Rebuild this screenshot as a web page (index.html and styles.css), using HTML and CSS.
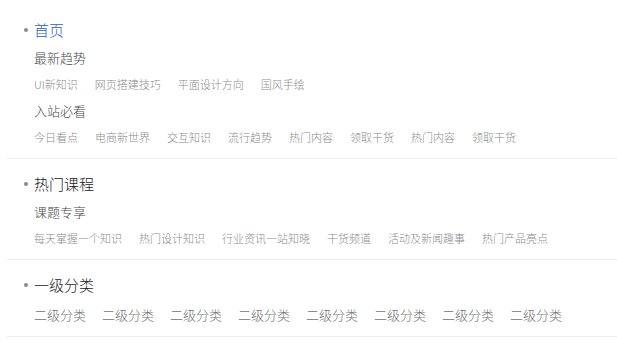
FILE: index.html
```html
<!DOCTYPE html>
<html>
	<head>
		<title>导航菜单</title>
		<link rel="stylesheet" href="styles.css">
	</head>
	<body>
		<ul class="menu">
			<li class="menu-item">
				<div class="menu-title active"><span class="dot"></span>首页</div>
				<div class="sub-title">最新趋势</div>
				<div class="links">
					<a>UI新知识</a>
					<a>网页搭建技巧</a>
					<a>平面设计方向</a>
					<a>国风手绘</a>
				</div>
				<div class="sub-title">入站必看</div>
				<div class="links">
					<a>今日看点</a>
					<a>电商新世界</a>
					<a>交互知识</a>
					<a>流行趋势</a>
					<a>热门内容</a>
					<a>领取干货</a>
					<a>热门内容</a>
					<a>领取干货</a>
				</div>
			</li>
			<li class="menu-item">
				<div class="menu-title"><span class="dot"></span>热门课程</div>
				<div class="sub-title">课题专享</div>
				<div class="links">
					<a>每天掌握一个知识</a>
					<a>热门设计知识</a>
					<a>行业资讯一站知晓</a>
					<a>干货频道</a>
					<a>活动及新闻趣事</a>
					<a>热门产品亮点</a>
				</div>
			</li>
			<li class="menu-item">
				<div class="menu-title"><span class="dot"></span>一级分类</div>
				<div class="links level-two">
					<a>二级分类</a>
					<a>二级分类</a>
					<a>二级分类</a>
					<a>二级分类</a>
					<a>二级分类</a>
					<a>二级分类</a>
					<a>二级分类</a>
					<a>二级分类</a>
				</div>
			</li>
		</ul>
	</body>
</html>
```

FILE: styles.css
```css
body {
	margin: 0;
	background-color: #ffffff;
	font-family: "Noto Sans CJK SC", "Liberation Sans", sans-serif;
}

.menu {
	list-style: none;
	margin: 5px 0 0 7px;
	padding: 0;
}

.menu-item {
	padding: 15px 0 11px 27px;
	border-bottom: 1px solid #eeeeee;
}

.menu-title {
	display: flex;
	align-items: center;
	font-size: 15px;
	font-weight: 300;
	line-height: 20px;
	color: #1a1a1a;
	margin-left: -10px;
}

.menu-title.active {
	color: #2c5cc5;
}

.dot {
	width: 4px;
	height: 4px;
	border-radius: 50%;
	background-color: #8a8a8a;
	margin-right: 6px;
}

.sub-title {
	font-size: 13px;
	font-weight: 300;
	line-height: 20px;
	color: #4a4a4a;
	margin-top: 8px;
}

.links + .sub-title {
	margin-top: 7px;
}

.links {
	display: flex;
	gap: 17px;
	margin-top: 6px;
	font-size: 11px;
	font-weight: 300;
	line-height: 20px;
	color: #8c8c8c;
}

.links a {
	white-space: nowrap;
	cursor: pointer;
}

.links.level-two {
	margin-top: 10px;
	font-size: 13px;
	gap: 16px;
	color: #737373;
}
```
